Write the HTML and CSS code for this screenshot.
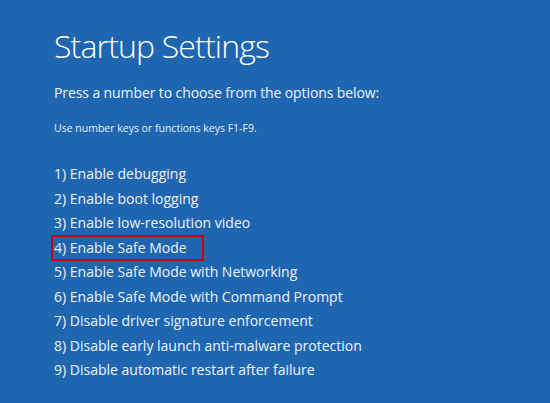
FILE: index.html
```html
<!DOCTYPE html>
<html lang="en">
<head>
    <meta charset="UTF-8">
    <title>Startup Settings</title>
    <link rel="stylesheet" href="styles.css">
</head>
<body>
    <div class="screen">
        <h1>Startup Settings</h1>
        <p class="prompt">Press a number to choose from the options below:</p>
        <p class="hint">Use number keys or functions keys F1-F9.</p>
        <ul class="options">
            <li>1) Enable debugging</li>
            <li>2) Enable boot logging</li>
            <li>3) Enable low-resolution video</li>
            <li class="selected">4) Enable Safe Mode</li>
            <li>5) Enable Safe Mode with Networking</li>
            <li>6) Enable Safe Mode with Command Prompt</li>
            <li>7) Disable driver signature enforcement</li>
            <li>8) Disable early launch anti-malware protection</li>
            <li>9) Disable automatic restart after failure</li>
        </ul>
    </div>
</body>
</html>
```

FILE: styles.css
```css
* {
    margin: 0;
    padding: 0;
    box-sizing: border-box;
}

html, body {
    width: 550px;
    height: 403px;
    overflow: hidden;
}

body {
    background: #1f66b1;
    color: #fff;
    font-family: "Open Sans", "Noto Sans", sans-serif;
}

.screen {
    padding: 26px 0 0 54px;
}

h1 {
    font-size: 32px;
    font-weight: 300;
    line-height: 40px;
    letter-spacing: -0.85px;
}

.prompt {
    margin-top: 17px;
    font-size: 14px;
    line-height: 20px;
    letter-spacing: -0.1px;
    color: #eef3fa;
}

.hint {
    margin-top: 18px;
    font-size: 10.5px;
    line-height: 14px;
    color: #e6eef8;
}

.options {
    list-style: none;
    margin-top: 27px;
}

.options li {
    font-size: 14px;
    line-height: 24.5px;
    color: #eef3fa;
}

.options li.selected {
    display: inline-block;
    margin: -1px 0 -0.5px -3px;
    padding: 0 15px 0 1px;
    border: 2px solid #c8000a;
    line-height: 22px;
    vertical-align: top;
}
```
